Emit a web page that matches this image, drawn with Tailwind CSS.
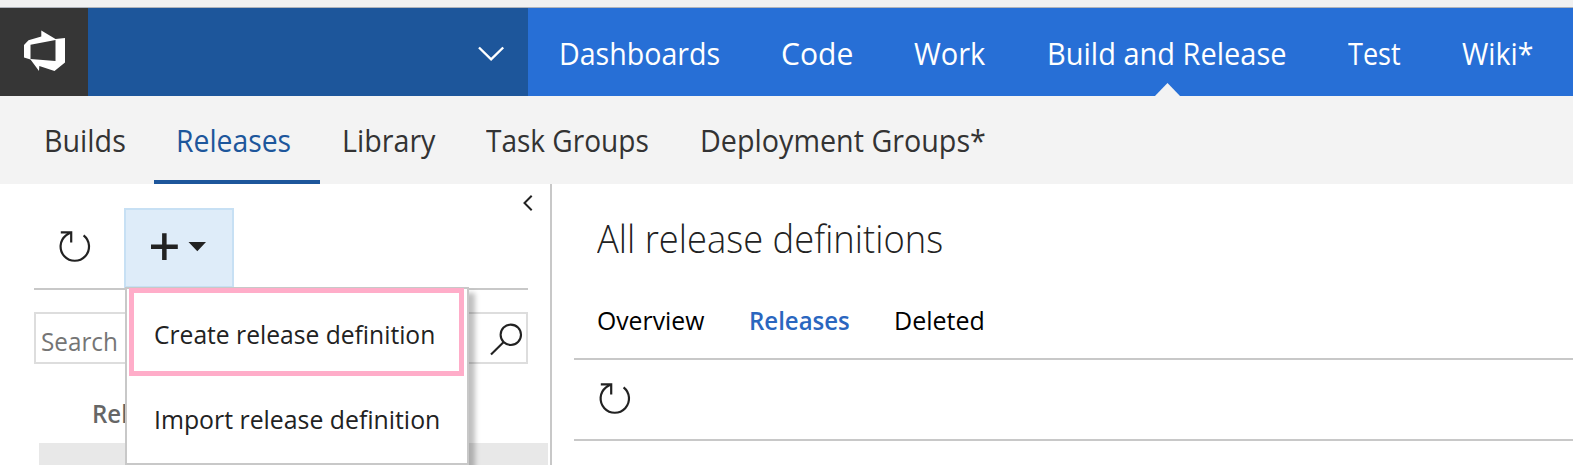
<!DOCTYPE html>
<html lang="en">
<head>
<meta charset="utf-8">
<title>Releases</title>
<script src="https://cdn.jsdelivr.net/npm/@tailwindcss/browser@4"></script>
</head>
<body class="h-[465px] w-[1573px] overflow-hidden bg-white font-['Open_Sans',sans-serif] text-[#222] whitespace-nowrap">
<div class="h-[7px] bg-[#f1f1f1]"></div>
<div class="h-px bg-[#b0b4bb]"></div>

<header class="flex h-[88px] bg-[#276fd6] text-white">
  <div class="w-[88px] bg-[#363636]">
    <svg class="size-[88px]" viewBox="0 8 88 88" fill="#fff"><path fill-rule="evenodd" d="M41.3 30.5 55.5 39 65 38V62.5L54.5 71 39.3 66 39 71 30.5 59.5 24 57.5V45L28.5 40.3 41.3 36.5ZM30.5 44.7V59L55.5 61V40Z"/></svg>
  </div>
  <div class="flex w-[440px] items-start justify-end bg-[#1d569b] pt-[37px] pr-[23px]">
    <svg class="h-[18px] w-[28px]" viewBox="0 0 28 18" fill="none" stroke="#fff" stroke-width="2.4"><path d="M2 2.5 14.1 14.3 26.2 2.5"/></svg>
  </div>
  <nav class="flex items-center pt-0.5 pl-[31px] text-[31px] leading-none">
    <a class="w-[222px]"><span class="inline-block origin-left scale-x-[.922]">Dashboards</span></a>
    <a class="w-[133px]"><span class="inline-block origin-left scale-x-[.97]">Code</span></a>
    <a class="w-[133px]"><span class="inline-block origin-left scale-x-[.936]">Work</span></a>
    <a class="relative w-[301px]"><span class="inline-block origin-left scale-x-[.935]">Build and Release</span>
      <svg class="absolute top-[45px] left-[106.5px] h-[14px] w-[27px]" viewBox="0 0 27 14" fill="#f3f3f3"><path d="M0 14 13.5 0 27 14Z"/></svg></a>
    <a class="w-[114px]"><span class="inline-block origin-left scale-x-[.873]">Test</span></a>
    <a class="w-[100px]"><span class="inline-block origin-left scale-x-[.92]">Wiki*</span></a>
  </nav>
</header>

<nav class="flex h-[88px] items-stretch bg-[#f3f3f3] pl-[44px] text-[31px] leading-[88px] text-[#333]">
  <a class="w-[110px]"><span class="inline-block origin-left scale-x-[.925]">Builds</span></a>
  <a class="h-[88px] w-[166px] border-b-4 border-[#1d569b] pl-[22.4px] text-[#1d569b]"><span class="inline-block h-[84px] origin-left scale-x-[.914]">Releases</span></a>
  <a class="ml-[21.6px] w-[144.9px]"><span class="inline-block origin-left scale-x-[.925]">Library</span></a>
  <a class="w-[213.3px]"><span class="inline-block origin-left scale-x-[.904]">Task Groups</span></a>
  <a><span class="inline-block origin-left scale-x-[.926]">Deployment Groups*</span></a>
</nav>

<div class="flex h-[281px]">
  <aside class="relative flex w-[552px] shrink-0 flex-col border-r-2 border-[#c8c8c8]">
    <svg class="absolute top-[10px] left-[522px] h-[18px] w-[12px]" viewBox="0 0 12 18" fill="none" stroke="#222" stroke-width="2"><path d="M9.7 1.8 2.5 9 9.7 16.2"/></svg>
    <div class="ml-[34px] flex h-[106px] w-[494px] border-b-2 border-[#c8c8c8]">
      <svg class="mt-[44px] ml-[22px] h-[38px] w-[38px]" viewBox="56 228 38 38" fill="none" stroke="#222" stroke-width="2.2"><path d="M83.6 235.4A14.2 14.2 0 1 1 66 235.4L70.8 232.4M60.8 232.4H71.2V242.6"/></svg>
      <button class="mt-6 ml-[30px] h-[80px] w-[110px] border-2 border-[#c7e0f4] bg-[#deecf9]">
        <svg class="h-[76px] w-[106px]" viewBox="126 210 106 76" fill="#222"><path d="M151 244.6H162.1V233.3H166.6V244.6H177.8V249H166.6V260H162.1V249H151ZM188.5 242H206L197.3 251.2Z"/></svg>
      </button>
    </div>
    <div class="mt-[22px] ml-[34px] flex h-[52px] w-[494px] items-center justify-between border-2 border-[#ddd] pr-0.5 pl-[5px] text-[25px] leading-none text-[#757575]">
      <span class="origin-left scale-x-[.97] pt-[7px]">Search</span>
      <svg class="h-[40px] w-[36px]" viewBox="488 319 36 40" fill="none" stroke="#222" stroke-width="2.1"><circle cx="510.8" cy="335.8" r="10.2"/><path d="M503.7 343 491 355.5"/></svg>
    </div>
    <div class="flex h-[79px] items-center pt-[20px] pl-[91.5px] text-[25px] leading-none font-semibold text-[#666]"><span class="origin-left scale-x-[.96]">Rel</span></div>
    <div class="ml-[39px] h-[22px] w-[509px] bg-[#e8e8e8]"></div>

    <!-- Add menu -->
    <div class="absolute top-[103px] left-[125px] flex h-[178px] w-[344px] flex-col border-2 border-[#c8c8c8] bg-white text-[25px] leading-none shadow-[6px_6px_5px_rgba(0,0,0,0.25)]">
      <div class="-mt-px ml-0.5 flex h-[88px] w-[335px] items-center border-[5px] border-[#ffadc9] pt-[6px] pl-[19.8px]"><span class="origin-left scale-x-[.985]">Create release definition</span></div>
      <div class="flex h-[88px] items-center pt-px pl-[26.6px]"><span class="origin-left scale-x-[.993]">Import release definition</span></div>
    </div>
  </aside>

  <main class="flex-1 pl-[22px]">
    <div class="h-[176px] border-b-2 border-[#c8c8c8] pl-[23px]">
      <h1 class="flex h-[106px] items-center text-[39px] leading-none font-light"><span class="origin-left scale-x-[.932]">All release definitions</span></h1>
      <div class="flex h-[60px] items-center text-[25px] leading-none text-black">
        <a class="w-[152px]"><span class="inline-block origin-left scale-x-[.99]">Overview</span></a>
        <a class="w-[145px] font-semibold text-[#2a66bf]"><span class="inline-block origin-left scale-x-[.96]">Releases</span></a>
        <a>Deleted</a>
      </div>
    </div>
    <div class="flex h-[81px] items-center border-b-2 border-[#c8c8c8] pb-0.5 pl-[21.7px]">
      <svg class="h-[38px] w-[38px]" viewBox="56 228 38 38" fill="none" stroke="#222" stroke-width="2.2"><path d="M83.6 235.4A14.2 14.2 0 1 1 66 235.4L70.8 232.4M60.8 232.4H71.2V242.6"/></svg>
    </div>
  </main>
</div>
</body>
</html>
